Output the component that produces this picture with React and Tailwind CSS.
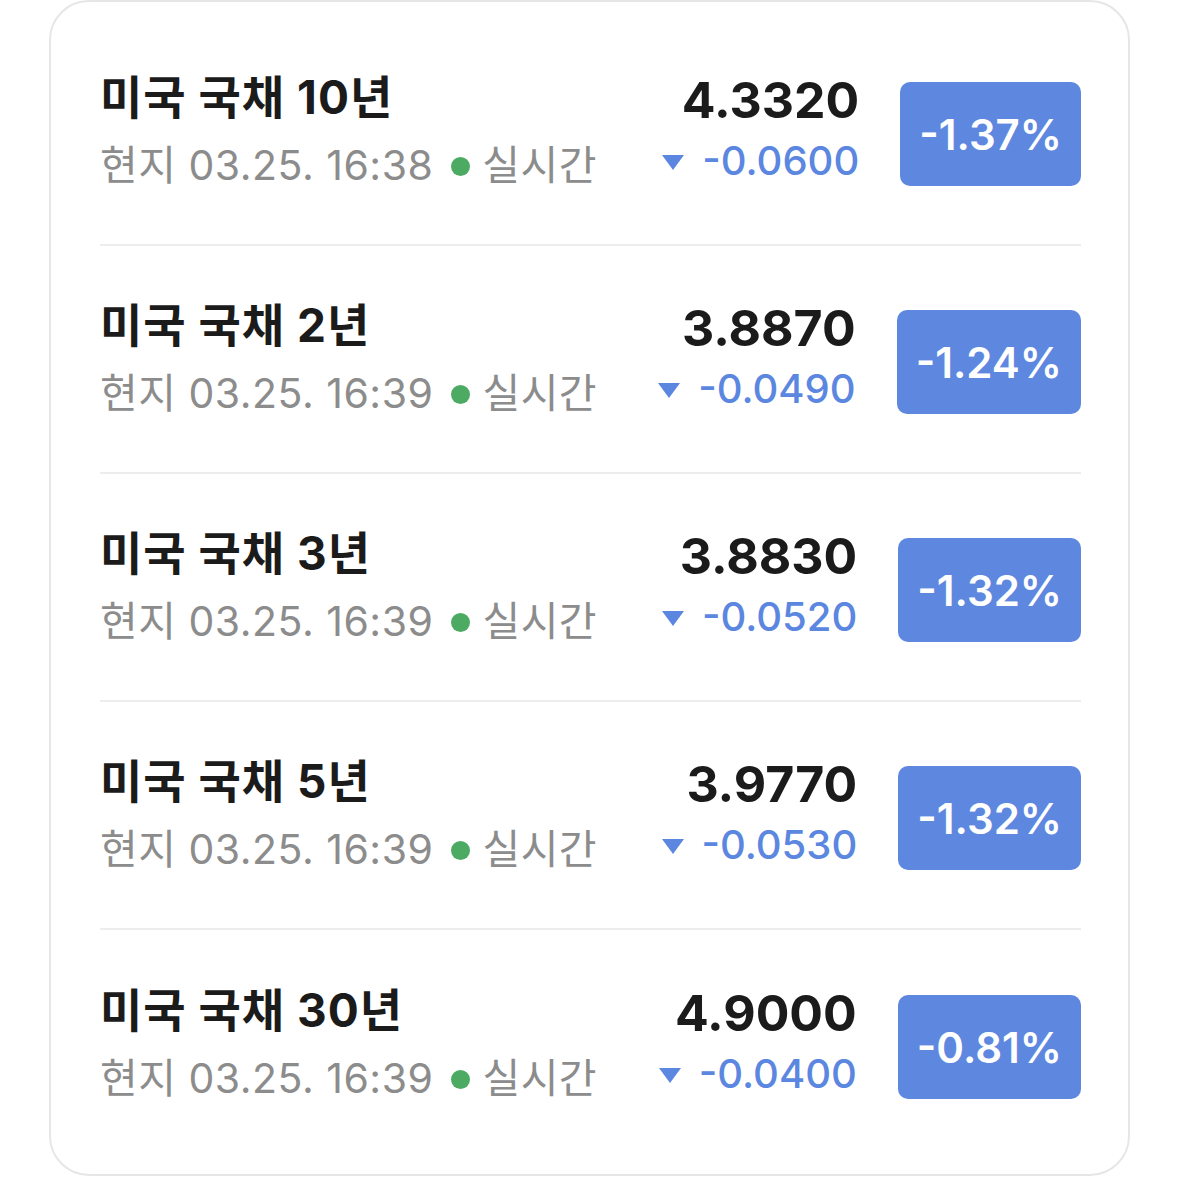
import React from 'react';

const rows = [
  { name: '미국 국채 10년', time: '03.25. 16:38', price: '4.3320', change: '-0.0600', rate: '-1.37%' },
  { name: '미국 국채 2년', time: '03.25. 16:39', price: '3.8870', change: '-0.0490', rate: '-1.24%' },
  { name: '미국 국채 3년', time: '03.25. 16:39', price: '3.8830', change: '-0.0520', rate: '-1.32%' },
  { name: '미국 국채 5년', time: '03.25. 16:39', price: '3.9770', change: '-0.0530', rate: '-1.32%' },
  { name: '미국 국채 30년', time: '03.25. 16:39', price: '4.9000', change: '-0.0400', rate: '-0.81%' },
];

function BondRow({ item, last }) {
  return (
    <div className={`flex items-center h-[228px] pt-[6px] ${last ? '' : 'border-b-2 border-[#ededed]'}`}>
      <div className="flex-1 flex flex-col mb-[6px]">
        <div className="text-[46px] leading-[56px] font-bold text-[#1b1b1b] tracking-[1px]">{item.name}</div>
        <div className="flex items-center text-[41px] leading-[56px] text-[#8c8c8c] mt-[12px] tracking-[0.5px]">
          <span>현지 {item.time}</span>
          <span className="w-[19px] h-[19px] rounded-full bg-[#4caa63] ml-[18px] mr-[12px] mt-[2px]" />
          <span>실시간</span>
        </div>
      </div>
      <div className="flex flex-col items-end mr-[41px] mb-[10px]">
        <div className="text-[50px] leading-[58px] font-bold text-[#1b1b1b]">{item.price}</div>
        <div className="flex items-center text-[40px] leading-[52px] text-[#5b87e0] font-medium mt-[6px]">
          <svg width="24" height="17" viewBox="0 0 24 17" className="mr-[17px] mt-[2px]">
            <polygon points="1,1 23,1 12,16" fill="#5b87e0" />
          </svg>
          <span>{item.change}</span>
        </div>
      </div>
      <div className="h-[104px] px-[19px] rounded-[10px] bg-[#5e88df] flex items-center text-white text-[42px] font-semibold">
        {item.rate}
      </div>
    </div>
  );
}

export default function App() {
  return (
    <div className="w-[1179px] h-[1177px] bg-white" style={{ fontFamily: 'Inter, "Noto Sans CJK KR", sans-serif' }}>
      <div className="ml-[49px] w-[1081px] h-[1176px] border-2 border-[#e6e6e6] rounded-[40px] pt-[16px] pl-[49px] pr-[47px]">
        {rows.map((item, i) => (
          <BondRow key={i} item={item} last={i === rows.length - 1} />
        ))}
      </div>
    </div>
  );
}
